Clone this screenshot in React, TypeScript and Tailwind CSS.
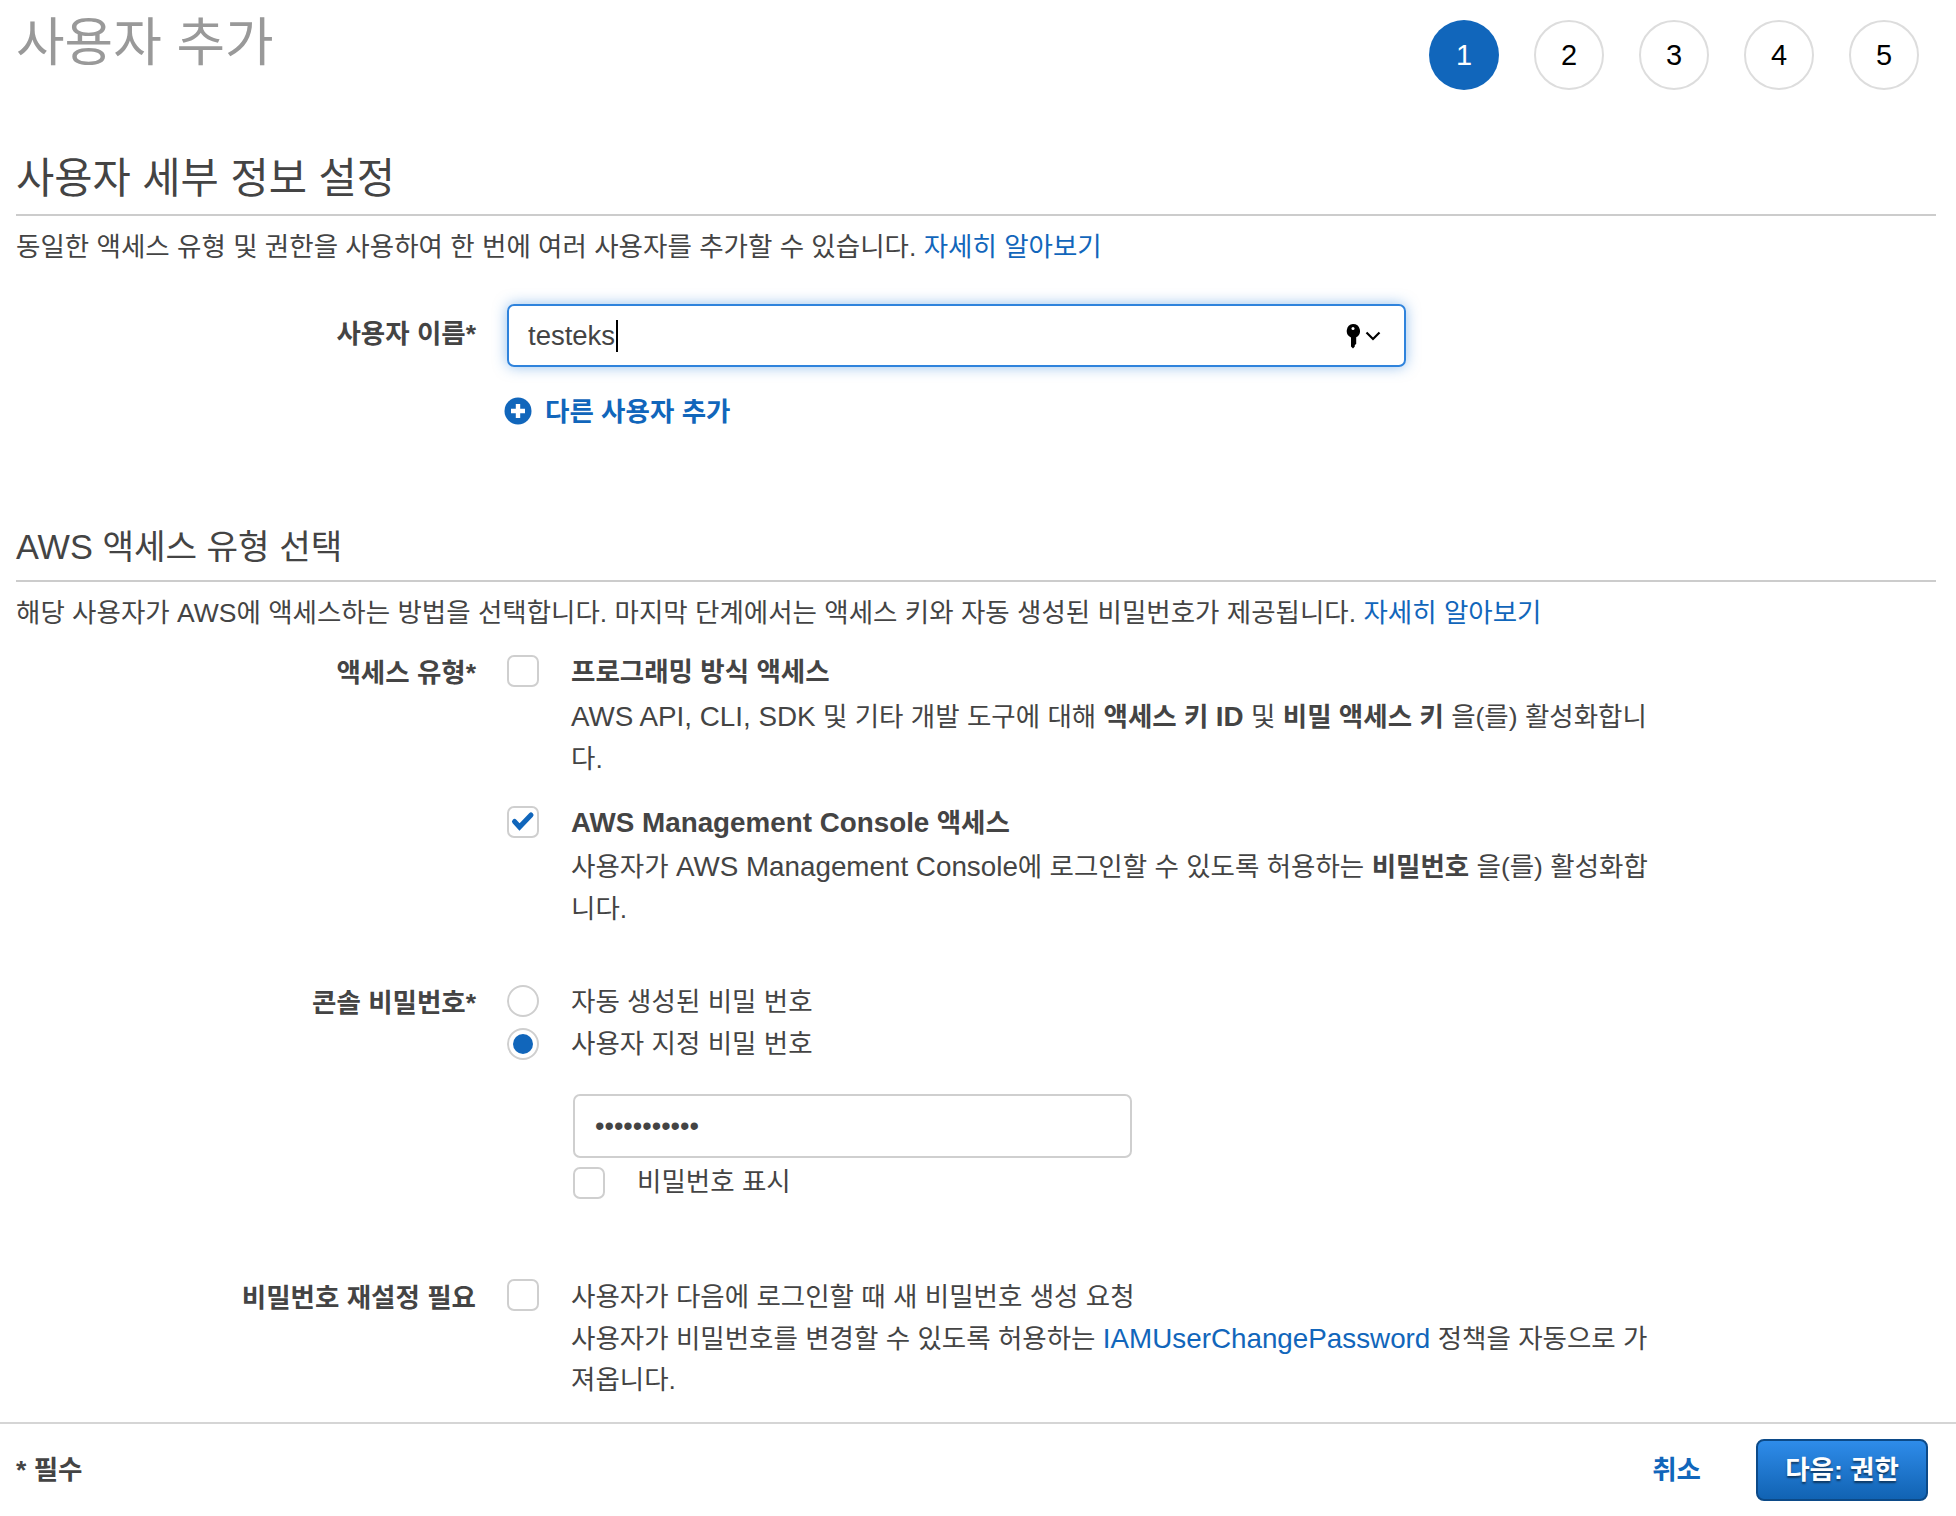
import React from "react";

const Box = ({ checked = false }: { checked?: boolean }) => (
  <span className="flex h-[32px] w-[32px] shrink-0 items-center justify-center rounded-[7px] border-[2.5px] border-[#cfcfcf] bg-white">
    {checked && (
      <svg width="32" height="32" viewBox="0 0 32 32" className="shrink-0">
        <path d="M7.5 15.5 L12.5 21 L24 9" fill="none" stroke="#1166bb" strokeWidth="5" strokeLinecap="round" strokeLinejoin="miter" />
      </svg>
    )}
  </span>
);

const Radio = ({ checked = false }: { checked?: boolean }) => (
  <span className="-mt-[2px] flex h-[32px] w-[32px] shrink-0 items-center justify-center rounded-full border-[2.5px] border-[#cfcfcf] bg-white">
    {checked && <span className="h-[20px] w-[20px] rounded-full bg-[#1166bb]" />}
  </span>
);

const Label = ({ children, className = "" }: { children: React.ReactNode; className?: string }) => (
  <div className={`w-[460px] shrink-0 text-right font-bold ${className}`}>{children}</div>
);

const A = ({ children }: { children: React.ReactNode }) => <a className="text-[#1166bb]">{children}</a>;
const L = ({ children }: { children: React.ReactNode }) => <span className="text-[27.8px] leading-none">{children}</span>;

export default function App() {
  return (
    <div className="flex h-[1516px] w-[1956px] flex-col overflow-hidden bg-white font-['Liberation_Sans','Noto_Sans_CJK_KR',sans-serif] text-[26.5px] leading-[41px] text-[#444]">
      <main className="min-h-0 flex-1 pl-[16px] pr-[20px]">
        <header className="flex h-[131px] items-start justify-between">
          <h1 className="mt-[13px] text-[52.8px] leading-[60px] text-[#999]">사용자 추가</h1>
          <ol className="mr-[17px] mt-[20px] flex gap-[35px] text-[29px] text-black">
            <li className="flex h-[70px] w-[70px] items-center justify-center rounded-full bg-[#1166bb] pt-[1px] text-white">1</li>
            {[2, 3, 4, 5].map((n) => (
              <li key={n} className="flex h-[70px] w-[70px] items-center justify-center rounded-full border-[2px] border-[#ddd] pt-[1px]">{n}</li>
            ))}
          </ol>
        </header>

        <h2 className="h-[85px] border-b-[2px] border-[#ccc] pt-[23px] text-[41.6px] leading-[50px]">사용자 세부 정보 설정</h2>
        <p className="mt-[11px]">동일한 액세스 유형 및 권한을 사용하여 한 번에 여러 사용자를 추가할 수 있습니다. <A>자세히 알아보기</A></p>

        <div className="mt-[36px] flex items-center gap-[31px]">
          <Label className="pb-[2px]">사용자 이름*</Label>
          <div className="flex h-[63px] w-[899px] items-center rounded-[7px] border-[2.5px] border-[#2f83dc] pl-[19px] pr-[23px] text-[27.5px] shadow-[0_0_14px_rgba(47,131,220,0.5)]">
            <span>testeks</span>
            <span className="ml-px h-[32px] w-[1.5px] bg-black" />
            <svg width="16" height="26" viewBox="0 0 16 26" className="ml-auto">
              <path d="M8 1 a7 7 0 0 1 3.2 13.2 V21 L9.8 22 V23.5 L8 25.5 L6 23.5 V14.4 A7 7 0 0 1 8 1 Z" fill="#000" />
              <circle cx="8" cy="5.5" r="1.5" fill="#fff" />
            </svg>
            <svg width="16" height="10" viewBox="0 0 16 10" className="ml-[4px]">
              <path d="M1.5 1.5 L8 8 L14.5 1.5" fill="none" stroke="#000" strokeWidth="2.2" />
            </svg>
          </div>
        </div>

        <div className="mt-[25px] flex items-center gap-[13px] pl-[488px] font-bold text-[#1166bb]">
          <svg width="28" height="28" viewBox="0 0 28 28" className="-mt-[3px]">
            <circle cx="14" cy="14" r="13.5" fill="#1166bb" />
            <path d="M14 7 V21 M7 14 H21" stroke="#fff" strokeWidth="4.4" />
          </svg>
          <span>다른 사용자 추가</span>
        </div>

        <h2 className="mt-[90px] h-[59px] border-b-[2px] border-[#ccc] pt-[1px] text-[34.3px] leading-[46px]">AWS 액세스 유형 선택</h2>
        <p className="mt-[11px]">해당 사용자가 AWS에 액세스하는 방법을 선택합니다. 마지막 단계에서는 액세스 키와 자동 생성된 비밀번호가 제공됩니다. <A>자세히 알아보기</A></p>

        <div className="mt-[18px] flex gap-[31px]">
          <Label className="pt-[1px]">액세스 유형*</Label>
          <div className="flex flex-col">
            <div className="flex gap-[32px]">
              <span className="mt-[3px]"><Box /></span>
              <div>
                <div className="h-[45px] font-bold">프로그래밍 방식 액세스</div>
                <div className="h-[41px]"><L>AWS API, CLI, SDK</L> 및 기타 개발 도구에 대해 <b>액세스 키 <L>ID</L></b> 및 <b>비밀 액세스 키</b> 을(를) 활성화합니</div>
                <div className="pt-[1px]">다.</div>
              </div>
            </div>
            <div className="mt-[23px] flex gap-[32px]">
              <span className="mt-[3px]"><Box checked /></span>
              <div>
                <div className="h-[44px] font-bold"><L>AWS Management Console</L> 액세스</div>
                <div className="h-[41px]">사용자가 <L>AWS Management Console</L>에 로그인할 수 있도록 허용하는 <b>비밀번호</b> 을(를) 활성화합</div>
                <div className="pt-[1px]">니다.</div>
              </div>
            </div>
          </div>
        </div>

        <div className="mt-[51px] flex gap-[31px]">
          <Label className="pt-[2px]">콘솔 비밀번호*</Label>
          <div className="flex flex-col">
            <div className="flex h-[42.5px] items-center gap-[32px]"><Radio /><span>자동 생성된 비밀 번호</span></div>
            <div className="flex h-[42.5px] items-center gap-[32px]"><Radio checked /><span>사용자 지정 비밀 번호</span></div>
            <div className="ml-[66px] mt-[28px] flex h-[64px] w-[559px] items-center rounded-[7px] border-[2.5px] border-[#cfcfcf] pl-[20px] text-[27px]">•••••••••••</div>
            <div className="ml-[66px] mt-[4px] flex items-center gap-[32px]"><Box /><span>비밀번호 표시</span></div>
          </div>
        </div>

        <div className="mt-[74px] flex gap-[31px]">
          <Label className="pt-[1px]">비밀번호 재설정 필요</Label>
          <div className="flex gap-[32px]">
            <span className="mt-[2px]"><Box /></span>
            <div>
              <div className="h-[42px]">사용자가 다음에 로그인할 때 새 비밀번호 생성 요청</div>
              <div className="h-[41px]">사용자가 비밀번호를 변경할 수 있도록 허용하는 <a className="text-[27.8px] leading-none text-[#1166bb]">IAMUserChangePassword</a> 정책을 자동으로 가</div>
              <div>져옵니다.</div>
            </div>
          </div>
        </div>
      </main>

      <footer className="flex h-[94px] shrink-0 items-center justify-between border-t-[2px] border-[#d5d5d5] pl-[16px] pr-[28px] font-bold">
        <span>* 필수</span>
        <div className="flex items-center gap-[55px]">
          <a className="text-[#1166bb]">취소</a>
          <button className="h-[62px] w-[172px] rounded-[8px] border-[2px] border-[#0c4a88] bg-gradient-to-b from-[#2e8cea] to-[#1163b3] font-bold text-white [text-shadow:0_2px_2px_rgba(0,0,0,0.5)]">다음: 권한</button>
        </div>
      </footer>
    </div>
  );
}
